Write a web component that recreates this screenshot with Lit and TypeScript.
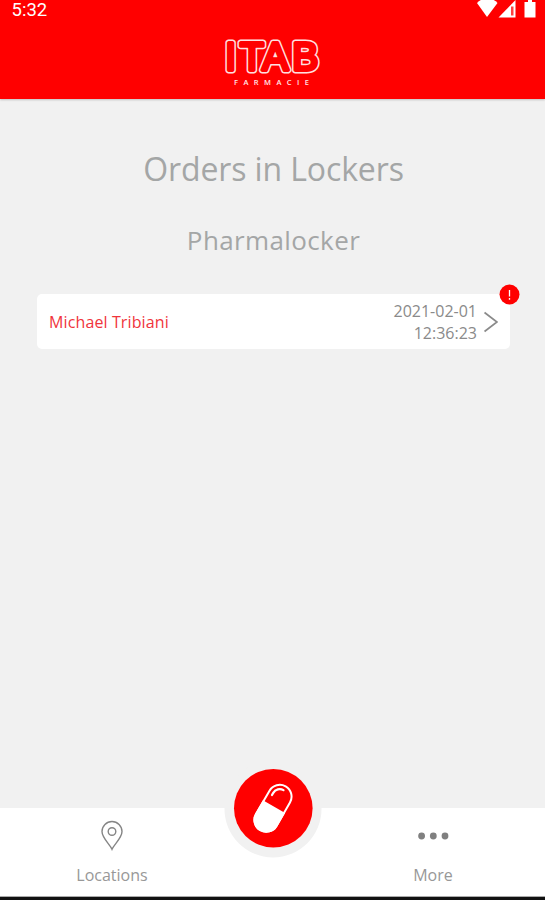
import { LitElement, html, css, svg } from "lit";
import { customElement, property } from "lit/decorators.js";

@customElement("status-bar")
class StatusBar extends LitElement {
  static styles = css`
    :host { display: flex; justify-content: space-between; height: 22px; color: #fff; }
    .time { font: 400 18.5px/21px Roboto, sans-serif; padding-left: 11.5px; }
    svg { display: block; }
  `;
  render() {
    return html`<span class="time">5:32</span>
      <svg width="70" height="22" viewBox="475 0 70 22" fill="#fff">
        <path d="M477 3Q480 0 483-1H491Q495 0 497.500 3L487 17Z" />
        <path d="M515.500 0V17.500H498.500Z" />
        <path d="M511 6.500H513.500V15.500H511Z" fill="#f00" opacity=".75" />
        <path d="M524.500 2H528V0H532V2H535.500V17.500H524.500Z" />
      </svg>`;
  }
}

@customElement("brand-logo")
class BrandLogo extends LitElement {
  static styles = css`
    :host { display: block; width: 110px; height: 56px; }
    svg { display: block; }
    text { font-family: "Liberation Sans", sans-serif; }
    .word { font-size: 39px; stroke-linejoin: round; stroke-linecap: round; }
    .outer { fill: #ffe0e0; stroke: #ffe0e0; stroke-width: 6.8px; }
    .inner { fill: #f00; stroke: #f00; stroke-width: 3.8px; }
    .sub { font: 600 7.500px "Open Sans", sans-serif; fill: #ffe8e8; }
  `;
  render() {
    const xs = "225.3 240 262.200 292.300";
    return html`<svg width="110" height="56" viewBox="218 36 110 56">
      ${["outer", "inner"].map(
        (c) => svg`<text class="word ${c}" x=${xs} y="70.300" aria-hidden=${c === "inner"}>ITAB</text>`
      )}
      <text class="sub" x="234" y="84.500" textLength="75" lengthAdjust="spacing">FARMACIE</text>
    </svg>`;
  }
}

@customElement("order-row")
class OrderRow extends LitElement {
  @property() name = "";
  @property() date = "";
  @property() time = "";
  static styles = css`
    :host {
      position: relative; display: flex; align-items: center; box-sizing: border-box;
      height: 55px; padding: 0 12px 0 12px; background: #fff; border-radius: 5px;
      font-family: "Open Sans", sans-serif; font-size: 16px;
    }
    .name { flex: 1; color: #f0343c; letter-spacing: 0.12px; }
    .when { color: #8a8a8a; line-height: 22px; text-align: right; padding-top: 1px; }
    .when div { white-space: nowrap; }
    .chevron { display: block; margin-left: 7px; }
    .badge { position: absolute; right: -10px; top: -10px; display: block; }
  `;
  render() {
    return html`<span class="name">${this.name}</span>
      <div class="when"><div>${this.date}</div><div>${this.time}</div></div>
      <svg class="chevron" width="14" height="22" viewBox="0 0 14 22" fill="none" stroke="#8a8a8a" stroke-width="1.800">
        <path d="M.500 1.500L13 11L.500 20.500" />
      </svg>
      <svg class="badge" width="21" height="21" viewBox="0 0 21 21">
        <circle cx="10.500" cy="10.500" r="10" fill="#f00" />
        <path d="M10.500 6V12.500M10.500 14V15.700" stroke="#fff" stroke-width="1.300" />
      </svg>`;
  }
}

@customElement("nav-bar")
class NavBar extends LitElement {
  static styles = css`
    :host {
      position: relative; display: grid; grid-template-columns: 224px 97px 224px;
      height: 92px; box-sizing: border-box; background: #fff; border-bottom: 3px solid #111;
      box-shadow: inset 0 -1px #aaa;
      font-family: "Open Sans", sans-serif; font-size: 16px; color: #989898;
    }
    .tab { display: flex; flex-direction: column; align-items: center; padding-top: 12px; }
    .tab svg { display: block; }
    .tab span { line-height: 22px; margin-top: 13px; }
    .main { position: absolute; left: 224px; top: -48px; display: block; }
  `;
  render() {
    return html`<div class="tab">
        <svg width="24" height="31" viewBox="0 0 24 31" fill="none" stroke="#858585" stroke-width="1.400">
          <path d="M12 29.300C10 24.500 2 18 2 11.500A10 10 0 0 1 22 11.500C22 18 14 24.500 12 29.300Z" />
          <circle cx="12" cy="11.500" r="3.800" />
        </svg>
        <span>Locations</span>
      </div>
      <svg class="main" width="98" height="98" viewBox="0 0 98 98">
        <circle cx="49" cy="49" r="48.500" fill="#f1f1f1" />
        <circle cx="49.300" cy="48.300" r="39.300" fill="#f00" />
        <g transform="translate(49 48.300) rotate(30)">
          <rect x="-11.800" y="-25.300" width="23.600" height="50.600" rx="11.800" fill="none" stroke="#fff" stroke-width="2" />
          <path d="M-12.800-2H12.800V13.500A12.800 12.800 0 0 1-12.800 13.500Z" fill="#fff" />
          <path d="M-7.500-11V-13.500A7.500 7.500 0 0 1 0-21" fill="none" stroke="#fff" stroke-width="2.200" stroke-linecap="round" />
        </g>
      </svg>
      <span></span>
      <div class="tab">
        <svg width="32" height="31" viewBox="0 0 32 31" fill="#808080">
          <circle cx="4.600" cy="16" r="3.400" /><circle cx="16.300" cy="16" r="3.400" /><circle cx="28" cy="16" r="3.400" />
        </svg>
        <span>More</span>
      </div>`;
  }
}

@customElement("app-root")
class AppRoot extends LitElement {
  static styles = css`
    :host {
      display: flex; flex-direction: column; height: 900px; background: #f1f1f1;
      font-family: "Open Sans", sans-serif; color: #a4a6a6; overflow: hidden;
    }
    header { height: 99px; background: #f00; box-shadow: 0 1px 2px rgba(0, 0, 0, 0.2); }
    brand-logo { margin: 14px auto 0; }
    main { flex: 1; padding: 0 35px 0 37px; }
    h1, h2 { margin: 0; font-weight: 400; text-align: center; }
    h1 { font-size: 32px; line-height: 44px; margin-top: 48px; letter-spacing: -0.12px; }
    h2 { font-size: 26px; line-height: 36px; margin-top: 31px; letter-spacing: 0.38px; }
    order-row { margin-top: 36px; }
  `;
  render() {
    return html`<header><status-bar></status-bar><brand-logo></brand-logo></header>
      <main>
        <h1>Orders in Lockers</h1>
        <h2>Pharmalocker</h2>
        <order-row name="Michael Tribiani" date="2021-02-01" time="12:36:23"></order-row>
      </main>
      <nav-bar></nav-bar>`;
  }
}
